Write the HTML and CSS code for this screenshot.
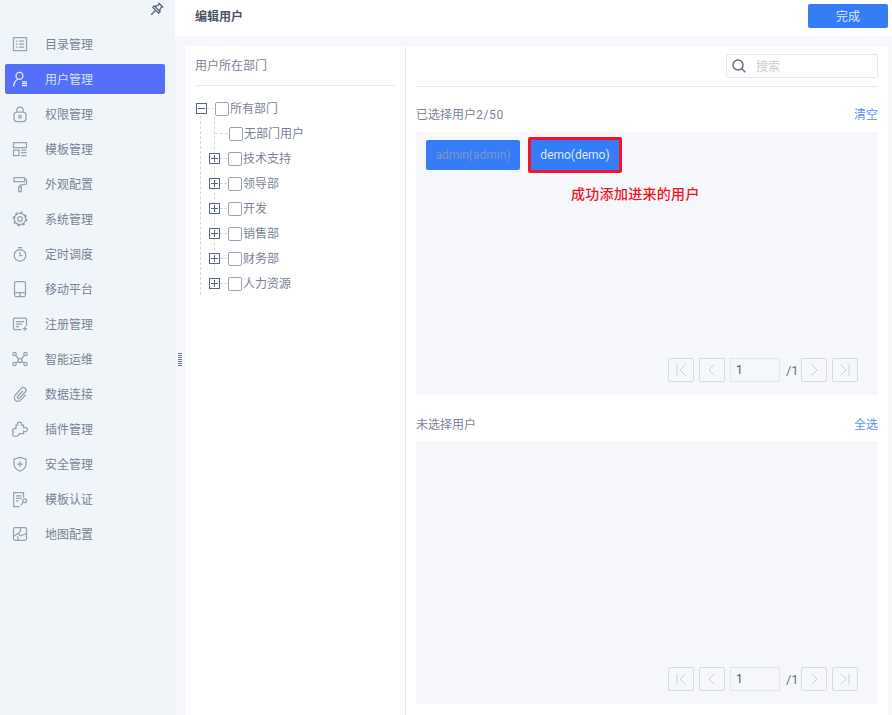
FILE: index.html
```html
<!DOCTYPE html>
<html lang="zh">
<head>
<meta charset="utf-8">
<title>编辑用户</title>
<link rel="stylesheet" href="styles.css">
</head>
<body>
<div class="app">
  <aside class="sidebar">
    <div class="pin-row">
      <svg class="pin" viewBox="0 0 14 14"><path d="M8.500 .8 13.200 5.500M9.800 2.100 6 4.300 4.300 3.800 10.200 9.700 9.700 8 11.900 4.200M4.300 3.800 2.800 5.300 8.700 11.200 10.200 9.700M5.700 8.300 1.200 12.800"/></svg>
    </div>
    <nav class="menu">
      <a class="item"><svg class="ic" viewBox="0 0 14 14"><path d="M.5.5h13v13H.5zM3 4h1.500M3 7h1.500M3 10h1.500M6 4h5M6 7h5M6 10h5"/></svg><span>目录管理</span></a>
      <a class="item active"><svg class="ic" viewBox="0 0 14 14"><circle cx="6.500" cy="3.800" r="3.500"/><path d="M.8 14.500c0-3.800 1.800-6 3.800-7.200M9 9.800h5M9 11.700h5M9 13.600h5"/></svg><span>用户管理</span></a>
      <a class="item"><svg class="ic" viewBox="0 0 14 14"><rect x="1" y="5" width="12" height="9.500" rx="3"/><path d="M3.800 5V3.300a3.200 3.200 0 0 1 6.400 0V5"/><circle cx="7" cy="9.700" r="1.300"/></svg><span>权限管理</span></a>
      <a class="item"><svg class="ic" viewBox="0 0 14 14"><path d="M.5.500h13v5H.5zM.5 8h5.500v5.500H.5zM8 8h5.500M8 10.700h5.500M8 13.500h5.500"/></svg><span>模板管理</span></a>
      <a class="item"><svg class="ic" viewBox="0 0 14 14"><path d="M1 .5h10.500v4H1zM11.500 2.300h2V7L7 8.300v1.500M5.700 9.800h2.600v4.700H5.700z"/></svg><span>外观配置</span></a>
      <a class="item"><svg class="ic" viewBox="0 0 14 14"><circle cx="7" cy="7" r="5.700"/><circle class="teeth" cx="7" cy="7" r="6.700"/><circle cx="7" cy="7" r="2.300"/></svg><span>系统管理</span></a>
      <a class="item"><svg class="ic" viewBox="0 0 14 14"><circle cx="7" cy="8.300" r="5.800"/><path d="M4.800.6h4.400M7 5v3.500h2.500"/></svg><span>定时调度</span></a>
      <a class="item"><svg class="ic" viewBox="0 0 14 14"><rect x="1.500" y="-.5" width="11" height="15" rx="1.500"/><path d="M1.500 10.500h11M7 10.500v4"/></svg><span>移动平台</span></a>
      <a class="item"><svg class="ic" viewBox="0 0 14 14"><path d="M8.500 12.500H1.500a1 1 0 0 1-1-1V2a1 1 0 0 1 1-1h11a1 1 0 0 1 1 1v7M3 4.500h8M3 7h6M3 9.500h3M9.700 11.700h4.500M12 9.500v4.500"/></svg><span>注册管理</span></a>
      <a class="item"><svg class="ic wide" viewBox="0 0 16 14"><circle cx="2.500" cy="2" r="1.700"/><circle cx="13.500" cy="2" r="1.700"/><circle cx="2.500" cy="12" r="1.700"/><circle cx="13.500" cy="12" r="1.700"/><circle cx="8" cy="8.500" r="2"/><path d="M3.700 3.300 6.600 7M12.300 3.300 9.400 7M3.900 11 6.300 9.500M12.100 11 9.700 9.500"/></svg><span>智能运维</span></a>
      <a class="item"><svg class="ic" viewBox="0 0 14 14"><path d="M10 3.800 4.600 9.500a1.200 1.200 0 0 0 1.800 1.700L12.200 5a2.600 2.600 0 0 0-3.800-3.600L2.300 8a3.700 3.700 0 0 0 5.400 5.100l5-5.300"/></svg><span>数据连接</span></a>
      <a class="item"><svg class="ic wide" viewBox="0 0 16 14"><path d="M7.500 0C9.200 0 10 1.300 9.400 3H11.500V5.800C13.200 5 15.500 5.600 15.500 7.500S13.200 10 11.500 9.200V11.500H7.500C6.800 14 4 14.800 1.500 14 .3 13.500.3 11.800 1 11 1.800 10.300 1.500 9.500.7 9.200.2 8 .8 6.500 2.500 6.300L4 6.500V3H5.600C5 1.300 5.800 0 7.500 0z"/></svg><span>插件管理</span></a>
      <a class="item"><svg class="ic" viewBox="0 0 14 14"><path d="M7 .3 13 2.200V7c0 3.500-3 6-6 7.300C4 13 1 10.500 1 7V2.200zM7 4.200v5.800M4.100 7.100h5.800"/></svg><span>安全管理</span></a>
      <a class="item"><svg class="ic" viewBox="0 0 14 14"><path d="M10.500 5.500V.5H.7v14h6M3 3.800h5.500M3 6.300h5.500M3 8.800h2.500M7.800 13.300l2.500-3"/><circle cx="11.700" cy="8.800" r="1.900"/></svg><span>模板认证</span></a>
      <a class="item"><svg class="ic" viewBox="0 0 14 14"><rect x=".5" y=".7" width="13" height="12.600" rx="1.500"/><path d="M7.500.7V4.500L5 6.500l2.500 2.300 6-2.300M5 6.500.5 9.300M5.500 13.300l-1-4"/></svg><span>地图配置</span></a>
    </nav>
  </aside>

  <main class="main">
    <header class="topbar">
      <h1 class="page-title">编辑用户</h1>
      <button class="done">完成</button>
    </header>
    <div class="gutter-wrap">
      <div class="handle" aria-hidden="true"></div>
      <section class="dept">
        <h2 class="dept-title">用户所在部门</h2>
        <ul class="tree">
          <li class="node root"><span class="box minus"></span><span class="dash"></span><span class="check"></span><span class="label">所有部门</span></li>
          <li class="node leaf"><span class="dash long"></span><span class="check"></span><span class="label">无部门用户</span></li>
          <li class="node child"><span class="box plus"></span><span class="dash"></span><span class="check"></span><span class="label">技术支持</span></li>
          <li class="node child"><span class="box plus"></span><span class="dash"></span><span class="check"></span><span class="label">领导部</span></li>
          <li class="node child"><span class="box plus"></span><span class="dash"></span><span class="check"></span><span class="label">开发</span></li>
          <li class="node child"><span class="box plus"></span><span class="dash"></span><span class="check"></span><span class="label">销售部</span></li>
          <li class="node child"><span class="box plus"></span><span class="dash"></span><span class="check"></span><span class="label">财务部</span></li>
          <li class="node child"><span class="box plus"></span><span class="dash"></span><span class="check"></span><span class="label">人力资源</span></li>
        </ul>
      </section>
      <section class="users">
        <div class="search-row">
          <label class="search">
            <svg class="search-ic" viewBox="0 0 14 14"><circle cx="6" cy="6" r="5"/><path d="M9.700 9.700 13.300 13.300"/></svg>
            <span class="ph">搜索</span>
          </label>
        </div>
        <div class="head"><span>已选择用户<span class="count">2/50</span></span><a class="link">清空</a></div>
        <div class="panel selected">
          <div class="chips">
            <span class="chip dim">admin(admin)</span>
            <span class="chip marked">demo(demo)</span>
          </div>
          <p class="note">成功添加进来的用户</p>
          <div class="pager">
            <span class="pg"><svg viewBox="0 0 14 14"><path d="M3 1.500v11M11.500 1.500 6 7l5.500 5.500"/></svg></span>
            <span class="pg"><svg viewBox="0 0 14 14"><path d="M9.500 1.500 4 7l5.500 5.500"/></svg></span>
            <span class="pg-input">1</span>
            <span class="pg-total">/1</span>
            <span class="pg"><svg viewBox="0 0 14 14"><path d="M4.500 1.500 10 7l-5.500 5.500"/></svg></span>
            <span class="pg"><svg viewBox="0 0 14 14"><path d="M11 1.500v11M2.500 1.500 8 7l-5.500 5.500"/></svg></span>
          </div>
        </div>
        <div class="head second"><span>未选择用户</span><a class="link">全选</a></div>
        <div class="panel unselected">
          <div class="pager">
            <span class="pg"><svg viewBox="0 0 14 14"><path d="M3 1.500v11M11.500 1.500 6 7l5.500 5.500"/></svg></span>
            <span class="pg"><svg viewBox="0 0 14 14"><path d="M9.500 1.500 4 7l5.500 5.500"/></svg></span>
            <span class="pg-input">1</span>
            <span class="pg-total">/1</span>
            <span class="pg"><svg viewBox="0 0 14 14"><path d="M4.500 1.500 10 7l-5.500 5.500"/></svg></span>
            <span class="pg"><svg viewBox="0 0 14 14"><path d="M11 1.500v11M2.500 1.500 8 7l-5.500 5.500"/></svg></span>
          </div>
        </div>
      </section>
    </div>
  </main>
</div>
</body>
</html>
```
FILE: styles.css
```css
* { box-sizing: border-box; }
html, body { margin: 0; height: 100%; overflow: hidden; }
body {
  font-family: "Roboto", "Noto Sans CJK SC", sans-serif;
  font-size: 12px;
  color: #7a8394;
  background: #f5f7fa;
}
h1, h2, p, ul { margin: 0; padding: 0; font-weight: normal; font-size: 12px; }
.app { display: flex; height: 715px; width: 892px; }

.sidebar { width: 175px; flex: none; background: #f0f5fa; }
.pin-row { height: 27px; padding: 2px 11px 0 0; display: flex; justify-content: flex-end; }
.pin { width: 14px; height: 14px; fill: none; stroke: #5b6577; stroke-width: 1.3; }
.menu { display: flex; flex-direction: column; }
.item {
  height: 30px; margin: 2px 10px 3px 5px; padding-left: 8px;
  display: flex; align-items: center; gap: 18px;
  border-radius: 2px; color: #7a8394; line-height: 30px;
}
.item span { margin-top: 1px; }
.item.active { background: #5470fb; color: #d6e0fb; }
.ic { width: 14px; height: 14px; flex: none; fill: none; stroke: #98a2b3; stroke-width: 1.25; overflow: visible; }
.ic.wide { width: 16px; margin: 0 -1px; }
.teeth { stroke-width: 1.4; stroke-dasharray: 2.630 2.630; }
.active .ic { stroke: #e4ebfd; }

.main { flex: 1; display: flex; flex-direction: column; min-width: 0; }
.topbar {
  height: 36px; flex: none; background: #fff;
  display: flex; align-items: flex-start; justify-content: space-between;
  padding: 4px 4px 0 20px;
}
.page-title { font-weight: 700; color: #4b5464; line-height: 26px; }
.done {
  width: 80px; height: 24px; border: 0; border-radius: 2px; padding: 0 0 2px;
  background: #357cf8; color: #dbe6fb; font: inherit;
}
.gutter-wrap { flex: 1; position: relative; display: flex; padding: 10px 4px 0 10px; min-height: 0; }
.handle {
  position: absolute; left: 3px; top: 317px; width: 4px; height: 13px;
  background: repeating-linear-gradient(#6b7485 0 1px, transparent 1px 2px);
  border-left: 1px dotted #6b7485;
}
.dept { width: 220px; flex: none; background: #fff; padding: 0 10px; }
.dept-title { height: 40px; line-height: 40px; border-bottom: 1px solid #e8eaed; color: #7a8394; }
.tree { list-style: none; margin-top: 10px; padding-left: 1px; position: relative; }
.tree::before {
  content: ""; position: absolute; left: 5px; top: 20px; height: 179px;
  border-left: 1px dashed #d5d9df;
}
.tree::after {
  content: ""; position: absolute; left: 19px; top: 20px; height: 155px;
  border-left: 1px dashed #d5d9df;
}
.node { height: 25px; display: flex; align-items: center; position: relative; z-index: 1; color: #7a8394; }
.label { margin-bottom: 2px; }
.root .label { margin-left: 1px; }
.leaf { padding-left: 19px; }
.leaf .label { margin-left: 1px; }
.child { padding-left: 13px; }
.child .label { margin-left: 1px; }
.box {
  width: 11px; height: 11px; flex: none; border: 1px solid #5a6780; background: #fff;
  position: relative;
}
.box::before { content: ""; position: absolute; left: 1px; right: 1px; top: 4px; height: 1px; background: #5a6780; }
.plus::after { content: ""; position: absolute; top: 1px; bottom: 1px; left: 4px; width: 1px; background: #5a6780; }
.dash { width: 7px; height: 0; flex: none; border-top: 1px dashed #d5d9df; }
.dash.long { width: 13px; }
.check {
  width: 14px; height: 14px; flex: none; margin-left: 1px;
  border: 1px solid #9aa5b8; border-radius: 2px; background: #fff;
}

.users {
  width: 482px; flex: none; margin-left: 1px; background: #fff; padding: 0 10px 11px;
  display: flex; flex-direction: column; box-shadow: -1px 0 0 #e8eaed;
}
.search-row { height: 41px; flex: none; border-bottom: 1px solid #e8eaed; display: flex; justify-content: flex-end; align-items: flex-start; padding-top: 8px; }
.search {
  width: 152px; height: 24px; border: 1px solid #e4e7ea; border-radius: 2px;
  display: flex; align-items: center; padding-left: 5px; gap: 10px;
}
.search-ic { width: 14px; height: 14px; fill: none; stroke: #5e6a7d; stroke-width: 1.4; }
.ph { color: #c9cdd3; margin-bottom: 1px; }
.head { height: 45px; flex: none; display: flex; justify-content: space-between; align-items: center; padding-top: 7px; color: #7a8394; }
.count { letter-spacing: .7px; }
.head.second { height: 46px; padding-top: 11px; }
.link { color: #5f8ff5; }
.panel { background: #f5f7fa; display: flex; flex-direction: column; flex: none; height: 263px; padding: 8px 20px 0 10px; position: relative; }
.chips { display: flex; gap: 8px; height: 30px; align-items: flex-start; }
.chip {
  width: 94px; height: 30px; background: #357cf8; border-radius: 2px;
  display: flex; align-items: center; justify-content: center; color: #dce7fb;
}
.chip.dim { color: #7b96c7; }
.chip.marked { height: 36px; margin-top: -3px; border: 3px solid #f5122c; border-radius: 2px; }
.note { margin-left: 145px; padding-top: 15px; height: 34px; line-height: 18px; font-size: 14px; letter-spacing: .3px; font-weight: 500; color: #f0141e; }
.pager { margin-top: auto; margin-bottom: 13px; display: flex; align-items: center; justify-content: flex-end; gap: 5px; height: 24px; }
.pg {
  width: 26px; height: 24px; border: 1px solid #d8dbe0; border-radius: 2px;
  display: flex; align-items: center; justify-content: center;
}
.pg svg { width: 14px; height: 14px; fill: none; stroke: #cdd1d7; stroke-width: 1; }
.pg-input { width: 50px; height: 24px; border: 1px solid #e4e7ea; padding-left: 5px; line-height: 22px; color: #4f5b70; }
.pg-total { width: 11px; color: #6b7485; font-size: 13px; white-space: nowrap; text-indent: 1px; }
```
